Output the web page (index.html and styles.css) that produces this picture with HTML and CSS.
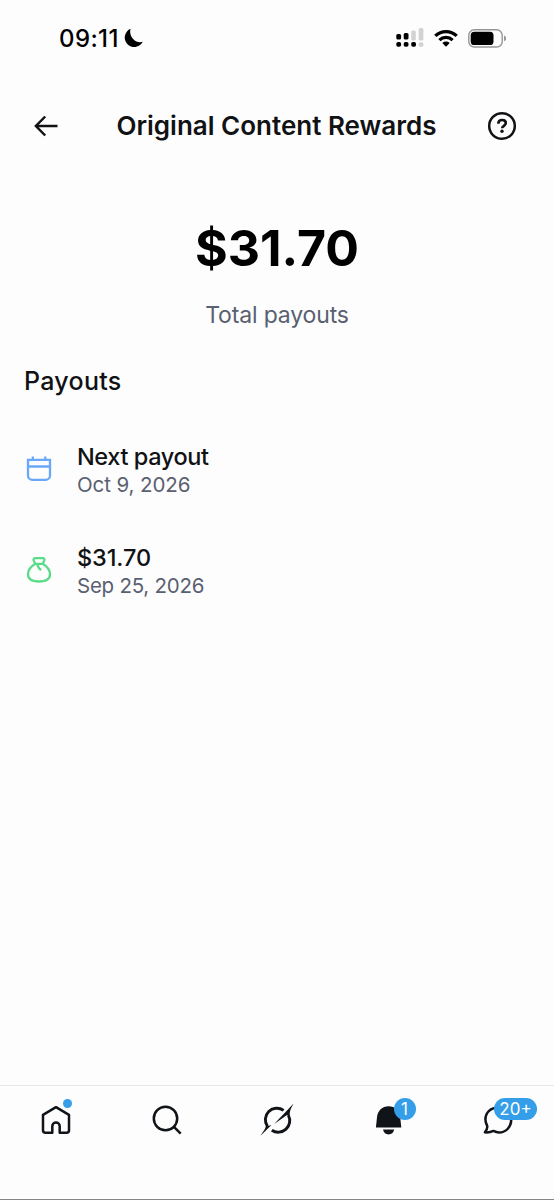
FILE: index.html
```html
<!DOCTYPE html>
<html lang="en">
<head>
<meta charset="utf-8">
<title>Original Content Rewards</title>
<link rel="stylesheet" href="styles.css">
</head>
<body>
<div class="screen">
  <div class="status">
    <div class="clock"><span class="time">09:11</span>
      <svg class="moon" width="20" height="20" viewBox="0 0 20 20"><path d="M7.600.7A9.500 9.500 0 1 0 19.700 13.800C12.500 15.800 5.300 8.300 7.600.7Z"/></svg>
    </div>
    <div class="indicators">
      <svg width="28" height="20" viewBox="0 0 28 20">
        <g fill="#d2d2d2"><rect x="15.200" y="2.500" width="4.600" height="10" rx="1.500"/><rect x="22.700" y="0" width="4.700" height="12.500" rx="1.500"/><rect x="22.700" y="14.200" width="4.700" height="4.600" rx="1.500"/></g>
        <rect x=".3" y="6" width="4.800" height="5.500" rx="1.600"/><rect x="7.700" y="5" width="4.800" height="6.500" rx="1.600"/>
        <rect x=".3" y="14" width="4.800" height="4.800" rx="1.800"/><rect x="7.700" y="14" width="4.800" height="4.800" rx="1.800"/><rect x="15.200" y="14" width="4.800" height="4.800" rx="1.800"/>
      </svg>
      <svg width="24" height="18" viewBox="0 0 24 18"><g fill="none" stroke="#000" stroke-width="3.300"><path d="M1.300 6.900a15.300 15.300 0 0 1 21.400 0"/><path d="M5.400 11.100a9.600 9.600 0 0 1 13.200 0"/></g><path d="M8.300 14a5.400 5.400 0 0 1 7.400 0L12 17.700Z"/></svg>
      <svg width="39" height="19" viewBox="0 0 39 19"><rect x=".8" y=".8" width="33.400" height="17.200" rx="5.500" fill="none" stroke="#969696" stroke-width="1.400"/><rect x="2.700" y="2.800" width="22.800" height="13.200" rx="3.600"/><path d="M36 6.500c2.800.8 2.800 5 0 5.800Z" fill="#969696"/></svg>
    </div>
  </div>
  <header class="header">
    <svg width="26" height="24" viewBox="0 0 26 24"><path d="M24.500 12H3.500M12.200 2.500 2.900 12l9.300 9.500" fill="none" stroke="#101214" stroke-width="2.500"/></svg>
    <h1 class="title">Original Content Rewards</h1>
    <svg width="30" height="30" viewBox="0 0 30 30"><g fill="none" stroke="#101214"><circle cx="15" cy="15" r="12.800" stroke-width="2.500"/><path d="M11.300 12.700c.1-2.400 1.600-3.700 3.800-3.700s3.700 1.200 3.700 3.100c0 2.700-3.600 2.700-3.700 5.200" stroke-width="2.600"/></g><circle cx="15" cy="20.200" r="1.700" fill="#101214"/></svg>
  </header>
  <main class="main">
    <section class="summary">
      <div class="amount">$31.70</div>
      <div class="caption">Total payouts</div>
    </section>
    <h2 class="section-title">Payouts</h2>
    <div class="list">
      <div class="row">
        <svg class="row-icon" width="30" height="30" viewBox="0 0 30 30"><path d="M4 4.800h22v15.600a4.400 4.400 0 0 1-4.400 4.400H8.400A4.400 4.400 0 0 1 4 20.400ZM4 11.500h22M8.800 1.500v3M21.300 1.500v3" fill="none" stroke="#69a8f8" stroke-width="2.300"/></svg>
        <div><div class="name">Next payout</div><div class="date oct">Oct 9, 2026</div></div>
      </div>
      <div class="row">
        <svg class="row-icon" width="30" height="30" viewBox="0 0 30 30"><g fill="none" stroke="#59dc88" stroke-width="2.300" stroke-linejoin="round"><path d="M11.300 7.800C7.200 10.300 4 14 4 18.300c0 4.600 4 7.200 11 7.200s11-2.600 11-7.200c0-4.300-3.200-8-7.300-10.500"/><path d="M11.300 7.800 9.700 4.600c-.6-1.300.2-2.500 1.600-2.500h7.400c1.400 0 2.200 1.200 1.600 2.500l-1.600 3.200ZM13.400 8c.3 2.700 1.600 4.600 3.700 6.200"/></g></svg>
        <div><div class="name paid">$31.70</div><div class="date">Sep 25, 2026</div></div>
      </div>
    </div>
  </main>
  <nav class="tabs">
    <div class="tab"><div class="glyph">
      <svg width="34" height="34" viewBox="0 0 34 34"><path d="M17 4.200 4 11.800v15.500a2.500 2.500 0 0 0 2.500 2.500h6.800v-6.500a3.700 3.700 0 0 1 7.400 0v6.500h6.800a2.500 2.500 0 0 0 2.500-2.500V11.800Z" fill="none" stroke="#101418" stroke-width="2.500" stroke-linejoin="round"/></svg>
      <span class="dot"></span></div></div>
    <div class="tab"><div class="glyph">
      <svg width="34" height="34" viewBox="0 0 34 34"><g fill="none" stroke="#101418" stroke-width="2.500"><circle cx="15.500" cy="15.500" r="11.700"/><path d="m23.700 23.700 7 7"/></g></svg>
    </div></div>
    <div class="tab"><div class="glyph">
      <svg width="34" height="34" viewBox="0 0 34 34"><g fill="none" stroke="#101418" stroke-width="2.900"><path d="M23.600 7.400A11.500 11.500 0 0 0 7.500 23.400"/><path d="M28.300 12.100A11.500 11.500 0 0 1 11.800 27.200"/></g><path d="M6 22.200C5.500 26.500 2.500 29 .5 32.800L11.500 22 8.200 22.900ZM33.600.4C31.500 4.500 29.500 7 29.700 13L27 12 14.200 21Z" fill="#101418"/></svg>
    </div></div>
    <div class="tab"><div class="glyph">
      <svg width="34" height="34" viewBox="0 0 34 34"><g transform="translate(.6 .2)"><path d="M4.300 24.300 5.400 14C6 7.600 10.600 3 17 3s11 4.600 11.600 11l1.100 10.300ZM11.400 26.300h11.200C22 29.500 20 31.200 17 31.200s-5-1.700-5.600-4.900Z" fill="#101418"/></g></svg>
      <span class="badge one">1</span></div></div>
    <div class="tab"><div class="glyph">
      <svg width="34" height="34" viewBox="0 0 34 34"><path d="M17.500 4.500C9.800 4.500 4.400 9.400 4.400 16.500c0 2.600.9 4.500 1.700 6.100.5 2-.4 4.500-2.200 6.700 3.100.4 6-.2 8.600-1.400 1.400.8 3.400 1.600 5.500 1.600 7.300 0 12.200-5.800 12.200-12.700 0-7.300-5.400-12.300-12.700-12.300Z" fill="none" stroke="#101418" stroke-width="2.500" stroke-linejoin="round"/></svg>
      <span class="badge many">20+</span></div></div>
  </nav>
</div>
</body>
</html>
```
FILE: styles.css
```css
* { box-sizing: border-box; }
body { margin: 0; background: #fefdfe; color: #101214; font-family: Inter, "Liberation Sans", sans-serif; }
svg { display: block; flex: none; }
h1, h2 { margin: 0; }
.screen { width: 554px; height: 1200px; display: flex; flex-direction: column; border-bottom: 1px solid #858585; white-space: nowrap; }
.status { height: 76px; padding: 0 47px 0 59px; display: flex; align-items: center; justify-content: space-between; }
.clock { display: flex; align-items: center; gap: 4px; }
.time { font-size: 24px; font-weight: 500; color: #000; letter-spacing: 0.4px; }
.indicators { display: flex; align-items: center; gap: 10px; }
.header { height: 100px; padding: 0 37px 0 33px; display: flex; align-items: center; justify-content: space-between; }
.title { font-size: 26px; font-weight: 600; line-height: 32px; margin-left: 7px; }
.main { flex: 1; }
.summary { padding-top: 40px; display: flex; flex-direction: column; align-items: center; }
.amount { color: #000; font-size: 50px; line-height: 64px; font-weight: 700; }
.caption { margin-top: 20px; font-size: 23px; line-height: 30px; color: #596070; letter-spacing: -0.15px; }
.section-title { margin: 35px 0 0 24px; font-size: 25px; line-height: 32px; font-weight: 500; letter-spacing: 0.3px; }
.list { padding: 44px 24px 0; display: flex; flex-direction: column; gap: 43px; }
.row { display: flex; align-items: center; gap: 23px; height: 58px; }
.name { font-size: 23.500px; line-height: 30px; font-weight: 500; letter-spacing: -0.4px; }
.paid { letter-spacing: -0.1px; }
.date { font-size: 20.500px; line-height: 26px; color: #596070; letter-spacing: -0.25px; }
.oct { letter-spacing: -0.1px; }
.tabs { height: 114px; border-top: 1px solid #e5e7e9; display: flex; justify-content: space-between; padding: 17px 39px 0; }
.glyph { position: relative; width: 34px; height: 34px; }
.dot { position: absolute; left: 24px; top: -4px; width: 9px; height: 9px; border-radius: 50%; background: #349ee9; }
.badge { position: absolute; top: -5px; height: 22px; border-radius: 11px; background: #349ee9; color: #fff; font-size: 17px; line-height: 22px; text-align: center; }
.one { left: 23px; width: 22px; }
.many { left: 13px; width: 43px; }
```
